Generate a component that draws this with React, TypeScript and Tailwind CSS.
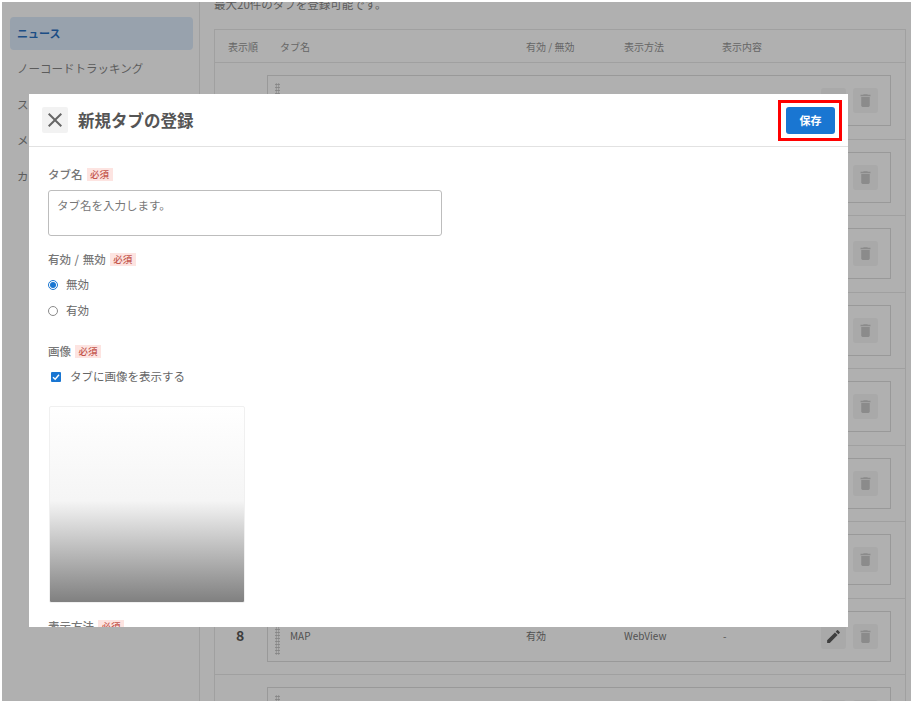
import { MdClose, MdDelete, MdEdit } from 'react-icons/md';

const FONT = "font-['Noto_Sans_CJK_JP','Noto_Sans',sans-serif]";
const sideItems = ['ノーコードトラッキング', 'スクリーン', 'メッセージ', 'カスタム'];
const rows = [1, 2, 3, 4, 5, 6, 7, 8, 9];

function Required() {
  return (
    <span className="ml-[4px] flex h-[13px] w-[26px] items-center justify-center bg-[#fde4e1] text-[9.5px] text-[#c4574e]">
      必須
    </span>
  );
}

function FieldLabel({ children }: { children: string }) {
  return (
    <div className="flex h-[13px] items-center text-[11.5px] font-medium leading-none text-[#777777] [word-spacing:1px]">
      {children}
      <Required />
    </div>
  );
}

function Row({ n }: { n: number }) {
  const isMap = n === 8;
  return (
    <div className="flex h-[76.5px] shrink-0 items-center border-b border-[#a0a0a0] pl-[52px] pr-[14px]">
      <div className="relative flex h-[51px] w-full items-start border border-[#999999] pl-[22px] pt-[2px]">
        <div className="absolute left-[7px] top-[7px] h-[36px] w-[5px] bg-[radial-gradient(#858585_0.8px,transparent_1px)] bg-[length:2.5px_3px]" />
        {isMap && (
          <>
            <span className="absolute left-[-32px] top-[16px] text-[14px] font-bold leading-none text-[#3c3c3c]">8</span>
            <span className="absolute left-[22px] top-[19px] text-[10px] leading-none text-[#505050]">MAP</span>
            <span className="absolute left-[258px] top-[19px] text-[10px] leading-none text-[#505050]">有効</span>
            <span className="absolute left-[356px] top-[19px] text-[10px] leading-none text-[#505050]">WebView</span>
            <span className="absolute left-[455px] top-[19px] text-[10px] leading-none text-[#505050]">-</span>
          </>
        )}
        <div className="absolute right-[12px] top-[12px] flex gap-[7px]">
          <div className="flex h-[25px] w-[25px] items-center justify-center rounded-[3px] bg-[#a9a9a9]">
            <MdEdit className="text-[17px] text-[#3f3f3f]" />
          </div>
          <div className="flex h-[25px] w-[25px] items-center justify-center rounded-[3px] bg-[#a9a9a9]">
            <MdDelete className="text-[17px] text-[#8b8b8b]" />
          </div>
        </div>
      </div>
    </div>
  );
}

export default function App() {
  return (
    <div className={`h-[703px] w-[913px] overflow-hidden bg-white p-[2px] ${FONT}`}>
      <div className="relative flex h-[699px] w-[909px] overflow-hidden bg-[#b0b0b0]">
        {/* Sidebar */}
        <aside className="h-full w-[198px] shrink-0 border-r border-[#a0a0a0] pl-[8px] pr-[6px] pt-[15px]">
          <div className="flex h-[33px] items-center rounded-[4px] bg-[#98a2ad] pl-[7px] text-[11px] font-bold text-[#1c4e85]">
            ニュース
          </div>
          <div className="flex flex-col pt-[1px]">
            {sideItems.map((label) => (
              <div key={label} className="flex h-[36px] items-center pl-[7px] text-[11.5px] text-[#5c5c5c]">
                {label}
              </div>
            ))}
          </div>
        </aside>

        {/* Tab list behind the dialog */}
        <main className="min-w-0 flex-1 pl-[14px] pr-[5px]">
          <p className="-mt-[6px] h-[32px] text-[11.5px] leading-[16px] text-[#5c5c5c]">最大20件のタブを登録可能です。</p>
          <div className="mt-[1px] border border-b-0 border-[#a0a0a0]">
            <div className="flex h-[33px] items-center border-b border-[#a0a0a0] text-[10px] text-[#666666]">
              <span className="ml-[13px] w-[52px]">表示順</span>
              <span className="w-[246px]">タブ名</span>
              <span className="w-[98px]">有効 / 無効</span>
              <span className="w-[98px]">表示方法</span>
              <span>表示内容</span>
            </div>
            <div className="flex flex-col">
              {rows.map((n) => (
                <Row key={n} n={n} />
              ))}
            </div>
          </div>
        </main>

        {/* Dialog */}
        <div className="absolute left-[27px] top-[92px] flex h-[533px] w-[819px] flex-col overflow-hidden bg-white">
          <header className="flex h-[53px] shrink-0 items-center justify-between border-b border-[#e2e2e2] pl-[13px] pr-[13px]">
            <div className="flex items-center gap-[10px]">
              <div className="flex h-[26px] w-[26px] items-center justify-center rounded-[2px] bg-[#f2f2f2]">
                <MdClose className="text-[24px] text-[#666666]" />
              </div>
              <h1 className="text-[16.5px] font-bold leading-none text-[#555555]">新規タブの登録</h1>
            </div>
            <button className="flex h-[27px] w-[49px] items-center justify-center rounded-[3px] bg-[#1976d2] text-[11px] font-bold text-white">
              保存
            </button>
          </header>

          <div className="flex flex-col pl-[19px] pt-[21px]">
            <FieldLabel>タブ名</FieldLabel>
            <textarea
              readOnly
              placeholder="タブ名を入力します。"
              className="mt-[9px] h-[46px] w-[394px] resize-none rounded-[3px] border border-[#bdbdbd] px-[8px] py-[6px] text-[11.5px] leading-[16px] placeholder:text-[#777777]"
            />

            <div className="mt-[17px]">
              <FieldLabel>有効 / 無効</FieldLabel>
            </div>
            <label className="mt-[11px] flex h-[16px] items-center text-[11.5px] text-[#666666]">
              <span className="flex h-[10px] w-[10px] items-center justify-center rounded-full border border-[#1976d2]">
                <span className="h-[6px] w-[6px] rounded-full bg-[#1976d2]" />
              </span>
              <span className="ml-[8px]">無効</span>
            </label>
            <label className="mt-[10px] flex h-[16px] items-center text-[11.5px] text-[#666666]">
              <span className="h-[10px] w-[10px] rounded-full border border-[#8a8a8a]" />
              <span className="ml-[8px]">有効</span>
            </label>

            <div className="mt-[26px]">
              <FieldLabel>画像</FieldLabel>
            </div>
            <label className="mt-[11px] flex h-[16px] items-center pl-[3px] text-[11.5px] text-[#666666]">
              <span className="flex h-[10px] w-[10px] items-center justify-center rounded-[1px] bg-[#1976d2]">
                <svg viewBox="0 0 10 10" className="h-[10px] w-[10px]" fill="none" stroke="white" strokeWidth="1.4">
                  <path d="M2 5.2 4.2 7.3 8 2.8" />
                </svg>
              </span>
              <span className="ml-[9px]">タブに画像を表示する</span>
            </label>

            <div className="ml-[1px] mt-[21px] h-[197px] w-[196px] rounded-[2px] border border-[#f0f0f0] bg-[linear-gradient(to_bottom,#ffffff_0%,#f5f5f5_48%,#808080_100%)]" />

            <div className="mt-[17px]">
              <FieldLabel>表示方法</FieldLabel>
            </div>
          </div>

          {/* Red annotation frame around the save button */}
          <div className="absolute left-[749px] top-[6px] h-[41px] w-[64px] border-[3px] border-[#ff0000]" />
        </div>
      </div>
    </div>
  );
}
